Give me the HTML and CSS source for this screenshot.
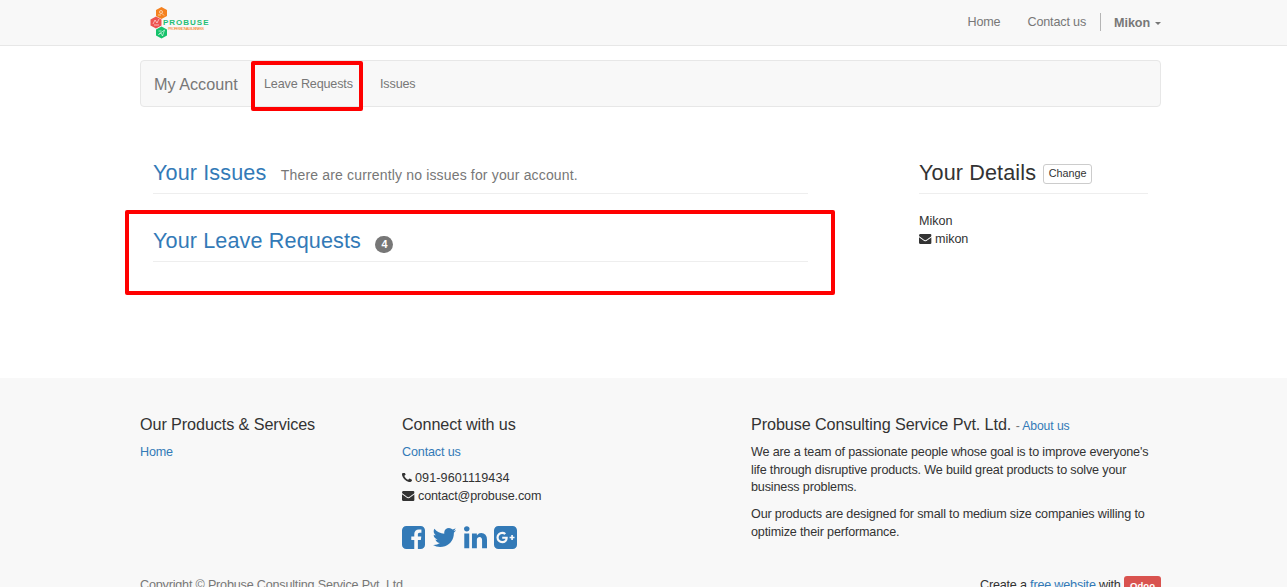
FILE: index.html
```
<!DOCTYPE html>
<html lang="en">
<head>
<meta charset="utf-8">
<title>My Account</title>
<link rel="stylesheet" href="styles.css">
</head>
<body>
<svg class="defs" width="0" height="0">
  <symbol id="envelope" viewBox="0 256 1792 1408"><path d="M1792 710v794q0 66-47 113t-113 47h-1472q-66 0-113-47t-47-113v-794q44 49 101 87 362 246 497 345 57 42 92.500 65.500t94.500 48 110 24.500h2q51 0 110-24.500t94.500-48 92.500-65.500q170-123 498-345 57-39 100-87zm0-294q0 79-49 151t-122 123q-376 261-468 325-10 7-42.500 31t-54 38.500-52 32.500-57.500 27-50 9h-2q-23 0-50-9t-57.500-27-52-32.500-54-38.500-42.500-31q-91-64-262-182.500t-205-142.500q-62-42-117-115.500t-55-136.500q0-78 41.500-130t118.500-52h1472q65 0 112.500 47t47.500 113z"/></symbol>
</svg>
<header class="topbar">
  <div class="container topbar-inner">
    <svg class="logo" viewBox="0 0 62 34" width="62" height="34">
      <path fill="#f58220" d="M11.500 1l5.500 3v6l-5.500 3-5.500-3V4z"/>
      <path fill="#ee5350" d="M6 10.500l5.500 3v6l-5.500 3-5.500-3v-6z"/>
      <path fill="#15c26b" d="M11.500 20.500l5.500 3v6l-5.500 3-5.500-3v-6z"/>
      <g fill="none" stroke="#fff" stroke-opacity=".65" stroke-width=".9">
        <circle cx="11" cy="6" r="1.500"/><path d="M12 7.500l2 2M8 9h3"/>
        <path d="M3 18l2-4 2 3 2-4M4 19h5"/>
        <path d="M8.500 28.500l6-4.500-2 6-1.500-3zM8.500 25h3"/>
      </g>
      <text x="13" y="18.800" class="logo-name" textLength="45.500">PROBUSE</text>
      <text x="18" y="24" class="logo-tag" textLength="36">PROFESSIONAL BUSINESS</text>
    </svg>
    <nav class="topnav">
      <a class="nav-home">Home</a>
      <a class="nav-contact">Contact us</a>
      <a class="user">Mikon<span class="caret"></span></a>
    </nav>
  </div>
</header>
<main class="container">
  <nav class="account-nav">
    <span class="brand">My Account</span>
    <a class="leave">Leave Requests</a>
    <a class="issues">Issues</a>
  </nav>
  <div class="columns">
    <section class="requests">
      <h3 class="heading"><a>Your Issues</a><small>There are currently no issues for your account.</small></h3>
      <h3 class="heading"><a>Your Leave Requests</a><span class="badge">4</span></h3>
    </section>
    <aside class="details">
      <h3 class="heading"><span>Your Details</span><a class="change">Change</a></h3>
      <div class="line contact-name">Mikon</div>
      <div class="line contact-name"><svg class="mail"><use href="#envelope"/></svg>mikon</div>
    </aside>
  </div>
</main>
<footer class="footer">
  <div class="container footer-grid">
    <div>
      <h4>Our Products &amp; Services</h4>
      <p class="link"><a>Home</a></p>
    </div>
    <div>
      <h4>Connect with us</h4>
      <p class="link"><a>Contact us</a></p>
      <div class="line tel"><svg class="phone" viewBox="192 256 1408 1408"><path d="M1600 1240q0 27-10 70.500t-21 68.500q-21 50-122 106-94 51-186 51-27 0-53-3.500t-57.500-12.500-47-14.500-55.500-20.500-49-18q-98-35-175-83-127-79-264-216t-216-264q-48-77-83-175-3-9-18-49t-20.500-55.500-14.500-47-12.500-57.500-3.500-53q0-92 51-186 56-101 106-122 25-11 68.500-21t70.500-10q14 0 21 3 18 6 53 76 11 19 30 54t35 63.500 31 53.500q3 4 17.500 25t21.500 35.500 7 28.500q0 20-28.500 50t-62 55-62 53-28.500 46q0 9 5 22.500t8.500 20.500 14 24 11.500 19q76 137 174 235t235 174q2 1 19 11.500t24 14 20.500 8.500 22.500 5q18 0 46-28.500t53-62 55-62 50-28.500q14 0 28.500 7t35.500 21.500 25 17.500q25 15 53.500 31t63.500 35 54 30q70 35 76 53 3 7 3 21z"/></svg>091-9601119434</div>
      <div class="line"><svg class="mail"><use href="#envelope"/></svg>contact@probuse.com</div>
      <div class="social">
        <svg viewBox="128 128 1536 1536"><path d="M1376 128q119 0 203.500 84.500t84.500 203.500v960q0 119-84.500 203.500t-203.500 84.500h-188v-595h199l30-232h-229v-148q0-56 23.500-84t91.500-28l122-1v-207q-63-9-178-9-136 0-217.500 80t-81.500 226v171h-200v232h200v595h-532q-119 0-203.500-84.500t-84.500-203.500v-960q0-119 84.500-203.500t203.500-84.500h960z"/></svg>
        <svg viewBox="128 128 1536 1536"><path d="M1684 408q-67 98-162 167 1 14 1 42 0 130-38 259.500t-115.500 248.500-184.500 210.500-258 146-323 54.500q-271 0-496-145 35 4 78 4 225 0 401-138-105-2-188-64.500t-114-159.500q33 5 61 5 43 0 85-11-112-23-185.500-111.500t-73.500-205.500v-4q68 38 146 41-66-44-105-115t-39-154q0-88 44-163 121 149 294.500 238.500t371.500 99.500q-8-38-8-74 0-134 94.500-228.500t228.500-94.500q140 0 236 102 109-21 205-78-37 115-142 178 93-10 186-50z"/></svg>
        <svg viewBox="128 128 1536 1536"><path d="M477 625v991h-330v-991h330zm21-306q1 73-50.500 122t-135.500 49h-2q-82 0-132-49t-50-122q0-74 51.500-122.500t134.500-48.500 133 48.500 51 122.500zm1166 729v568h-329v-530q0-105-40.500-164.500t-126.500-59.500q-63 0-105.500 34.500t-63.500 85.500q-11 30-11 81v553h-329q2-399 2-647t-1-296l-1-48h329v144h-2q20-32 41-56t56.500-52 87-43.500 114.500-15.500q171 0 275 113.500t104 332.500z"/></svg>
        <svg viewBox="128 128 1536 1536"><path d="M1045 905q0-26-6-64h-362v132h217q-3 24-16.500 50t-37.500 53-66.500 44.500-96.500 17.500q-99 0-169-71t-70-171 70-171 169-71q92 0 153 59l104-101q-108-100-257-100-160 0-272 112.500t-112 271.500 112 271.500 272 112.500q165 0 266.500-105t101.500-270zm345 46h109v-110h-109v-110h-110v110h-110v110h110v110h110v-110zm274-535v960q0 119-84.500 203.500t-203.500 84.500h-960q-119 0-203.500-84.500t-84.500-203.500v-960q0-119 84.500-203.500t203.500-84.500h960q119 0 203.500 84.500t84.500 203.500z"/></svg>
      </div>
    </div>
    <div class="about">
      <h4>Probuse Consulting Service Pvt. Ltd. <small>- <a>About us</a></small></h4>
      <p>We are a team of passionate people whose goal is to improve everyone's<br>life through disruptive products. We build great products to solve your<br>business problems.</p>
      <p>Our products are designed for small to medium size companies willing to<br>optimize their performance.</p>
    </div>
  </div>
  <div class="container legal">
    <span class="copyright">Copyright © Probuse Consulting Service Pvt. Ltd.</span>
    <span class="powered">Create a <a>free website</a> with <b class="odoo">Odoo</b></span>
  </div>
</footer>
<div class="mark mark-nav"></div>
<div class="mark mark-leave"></div>
</body>
</html>
```
FILE: styles.css
```
* { box-sizing: border-box; }
body {
  margin: 0;
  height: 587px;
  overflow: hidden;
  position: relative;
  background: #fff;
  color: #333;
  font: 12.6px/18px "Liberation Sans", Arial, sans-serif;
  letter-spacing: -.155px;
}
.defs { position: absolute; }
a { color: #337ab7; white-space: nowrap; }
h3, h4, p { margin: 0; font-weight: 400; }
.container { width: 1021px; margin-left: 140px; }

.topbar { height: 46px; background: #f8f8f8; border-bottom: 1px solid #e7e7e7; }
.topbar-inner { display: flex; justify-content: space-between; }
.logo { margin: 6px 0 0 10px; letter-spacing: 0; }
.logo-name { font: bold 8px "Liberation Sans", Arial, sans-serif; fill: #1fbf75; }
.logo-tag { font: 3.800px "Liberation Sans", Arial, sans-serif; fill: #f58220; }
.topnav { display: flex; padding-top: 13px; }
.topnav a { color: #777; }
.nav-contact { margin-left: 27px; }
.user {
  display: flex;
  align-items: center;
  height: 18px;
  margin-left: 14px;
  padding-left: 13px;
  border-left: 1px solid #b5b5b5;
  font-weight: 700;
  letter-spacing: -.1px;
  line-height: 20px;
}
.topnav .user { padding-top: 1px; }
.caret { margin: 1px 0 0 5px; border: 3px solid transparent; border-top-color: #777; border-bottom: 0; }

.account-nav {
  display: flex;
  height: 47px;
  margin-top: 14.400px;
  padding: 14px 13px 0;
  background: #f8f8f8;
  border: 1px solid #e7e7e7;
  border-radius: 4px;
  color: #777;
}
.account-nav a { color: #777; }
.brand { width: 110px; font-size: 16.200px; line-height: 18px; letter-spacing: 0; }
.leave { width: 116px; }

.columns { display: flex; justify-content: space-between; padding: 45.600px 13px 0; height: 270.600px; }
.requests { width: 655px; }
.details { width: 229px; }
.heading {
  display: flex;
  align-items: baseline;
  height: 41px;
  padding-top: 8px;
  margin-bottom: 27px;
  border-bottom: 1px solid #eee;
  font-size: 21.600px;
  line-height: 24px;
  letter-spacing: .12px;
}
.heading small { margin-left: 14.500px; font-size: 14px; letter-spacing: .16px; color: #777; }
.details .heading { margin-bottom: 18px; }
.badge {
  margin-left: 14.500px;
  width: 18px;
  height: 17px;
  border-radius: 9px;
  background: #777;
  color: #fff;
  font: bold 10.800px/17px "Liberation Sans", Arial, sans-serif;
  text-align: center;
}
.change {
  align-self: flex-start;
  margin: 3px 0 0 7px;
  width: 49px;
  height: 20px;
  border: 1px solid #ccc;
  border-radius: 3px;
  color: #333;
  font-size: 10.800px;
  line-height: 17px;
  letter-spacing: 0;
  text-align: center;
}
.line { display: flex; align-items: center; }
.contact-name { letter-spacing: -.05px; }
.tel { letter-spacing: .09px; }
.mail { width: 12.600px; height: 10px; margin-right: 3.400px; fill: #333; }
.phone { width: 10px; height: 10px; margin-right: 3px; fill: #333; }

.footer { height: 209px; background: #f8f8f8; }
.footer-grid { display: grid; grid-template-columns: 262px 349px 410px; height: 197px; padding-top: 36px; }
.footer h4 { font-size: 16.200px; line-height: 20px; margin-bottom: 8.400px; letter-spacing: -.095px; }
.footer h4 small { font-size: 12.200px; color: #777; }
.footer p { margin-bottom: 9.300px; line-height: 17.700px; }
.footer .about h4 { margin-bottom: 8px; }
.footer .link { line-height: 20px; margin-bottom: 6.800px; }
.social { display: flex; gap: 7.800px; margin-top: 20.800px; }
.social svg { width: 23px; height: 23px; fill: #337ab7; }
.legal { display: flex; justify-content: space-between; line-height: 20px; letter-spacing: -.19px; }
.copyright { color: #777; }
.odoo {
  display: inline-block;
  width: 37px;
  height: 20px;
  border-radius: 3px;
  background: #d9534f;
  color: #fff;
  font-size: 9.500px;
  letter-spacing: .1px;
  text-align: center;
}

.mark { position: absolute; border: 4px solid #f00; border-radius: 2px; }
.mark-nav { left: 251px; top: 61px; width: 112px; height: 50px; }
.mark-leave { left: 125px; top: 210px; width: 710px; height: 85px; }
```
